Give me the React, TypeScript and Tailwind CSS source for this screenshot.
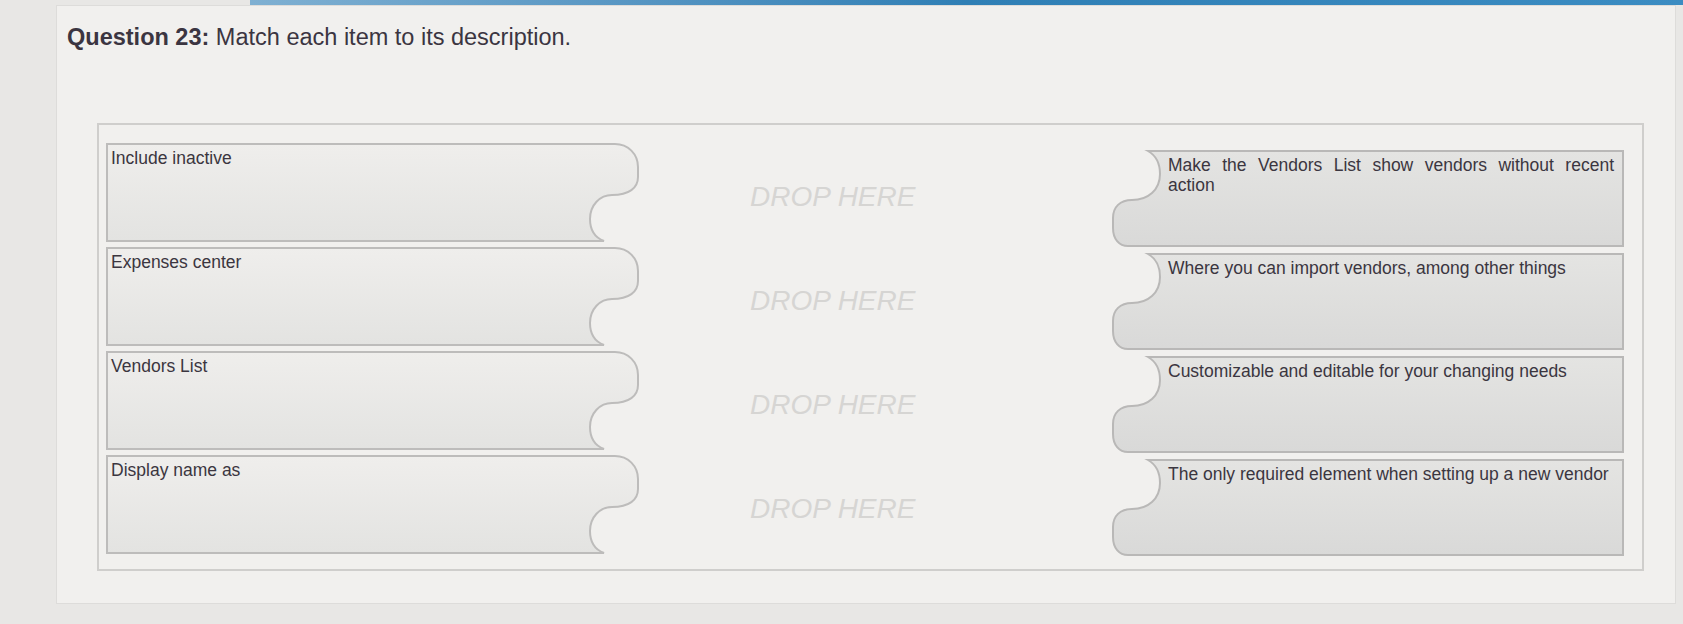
const prompts = ['Include inactive', 'Expenses center', 'Vendors List', 'Display name as'];

const answers = [
  'Make the Vendors List show vendors without recent action',
  'Where you can import vendors, among other things',
  'Customizable and editable for your changing needs',
  'The only required element when setting up a new vendor',
];

// Left tile: tab sticks out on the upper right, socket cut in on the lower right
function PromptTile({ label, idx }: { label: string; idx: number }) {
  return (
    <div className="relative w-[532px] h-[99px]">
      <svg className="absolute inset-0 overflow-visible" width="534" height="99">
        <defs>
          <linearGradient id={`pg${idx}`} x1="0" y1="0" x2="0" y2="1">
            <stop offset="0" stopColor="#efeeec" />
            <stop offset="1" stopColor="#e3e3e1" />
          </linearGradient>
        </defs>
        <path
          d="M1,1 H509 C522,1 532,11 532,24 V34 C532,45 523,52 506,52 C494,52 484,62 484,76 C484,88 490,95 498,98 H1 Z"
          fill={`url(#pg${idx})`}
          stroke="#bdbcbb"
          strokeWidth="2"
        />
      </svg>
      <p className="relative pl-[5px] pt-[5px] text-[17.5px] leading-[21px] text-[#3b3640]">{label}</p>
    </div>
  );
}

// Right tile: socket on the upper left, tab on the lower left
function AnswerTile({ label, idx }: { label: string; idx: number }) {
  return (
    <div className="relative w-[512px] h-[97px]">
      <svg className="absolute inset-0 overflow-visible" width="512" height="97">
        <defs>
          <linearGradient id={`ag${idx}`} x1="0" y1="0" x2="0" y2="1">
            <stop offset="0" stopColor="#e4e4e2" />
            <stop offset="1" stopColor="#d9d9d8" />
          </linearGradient>
        </defs>
        <path
          d="M36,1 H511 V96 H16 C7,96 1,89 1,78 V68 C1,57 8,50 20,50 C36,50 48,40 48,24 C48,12 43,5 36,1 Z"
          fill={`url(#ag${idx})`}
          stroke="#b9b8b7"
          strokeWidth="2"
        />
      </svg>
      <p className="relative pl-[56px] pr-[10px] pt-[5px] text-[17.5px] leading-[20px] text-justify text-[#3b3640]">
        {label}
      </p>
    </div>
  );
}

export default function App() {
  return (
    <div className="min-h-screen bg-[#e8e7e5] font-['Liberation_Sans',Arial,sans-serif]">
      <div className="h-[5px] ml-[250px] bg-gradient-to-r from-[#7fb0d2] via-[#2f7fb5] to-[#3b8cc2]" />
      <div className="ml-[56px] mr-[7px] h-[599px] border border-[#dddcda] bg-[#f1f0ee]">
        <h1 className="pl-[10px] pt-[17px] text-[23.5px] leading-[28px] text-[#3b3541]">
          <span className="font-bold">Question 23:</span> Match each item to its description.
        </h1>

        <div className="mt-[72px] ml-[40px] w-[1547px] h-[448px] border-2 border-[#cfcecc] flex pl-[7px] pr-[18px] pt-[18px]">
          <div className="flex flex-col gap-[5px]">
            {prompts.map((p, i) => (
              <PromptTile key={p} label={p} idx={i} />
            ))}
          </div>

          <div className="flex-1 flex flex-col gap-[5px]">
            {prompts.map((p) => (
              <div key={p} className="h-[99px] flex items-center pl-[112px] pt-[8px]">
                <span className="italic text-[28px] text-[#d6d5d3]">DROP HERE</span>
              </div>
            ))}
          </div>

          <div className="flex flex-col gap-[6px] pt-[7px]">
            {answers.map((a, i) => (
              <AnswerTile key={a} label={a} idx={i} />
            ))}
          </div>
        </div>
      </div>
    </div>
  );
}
